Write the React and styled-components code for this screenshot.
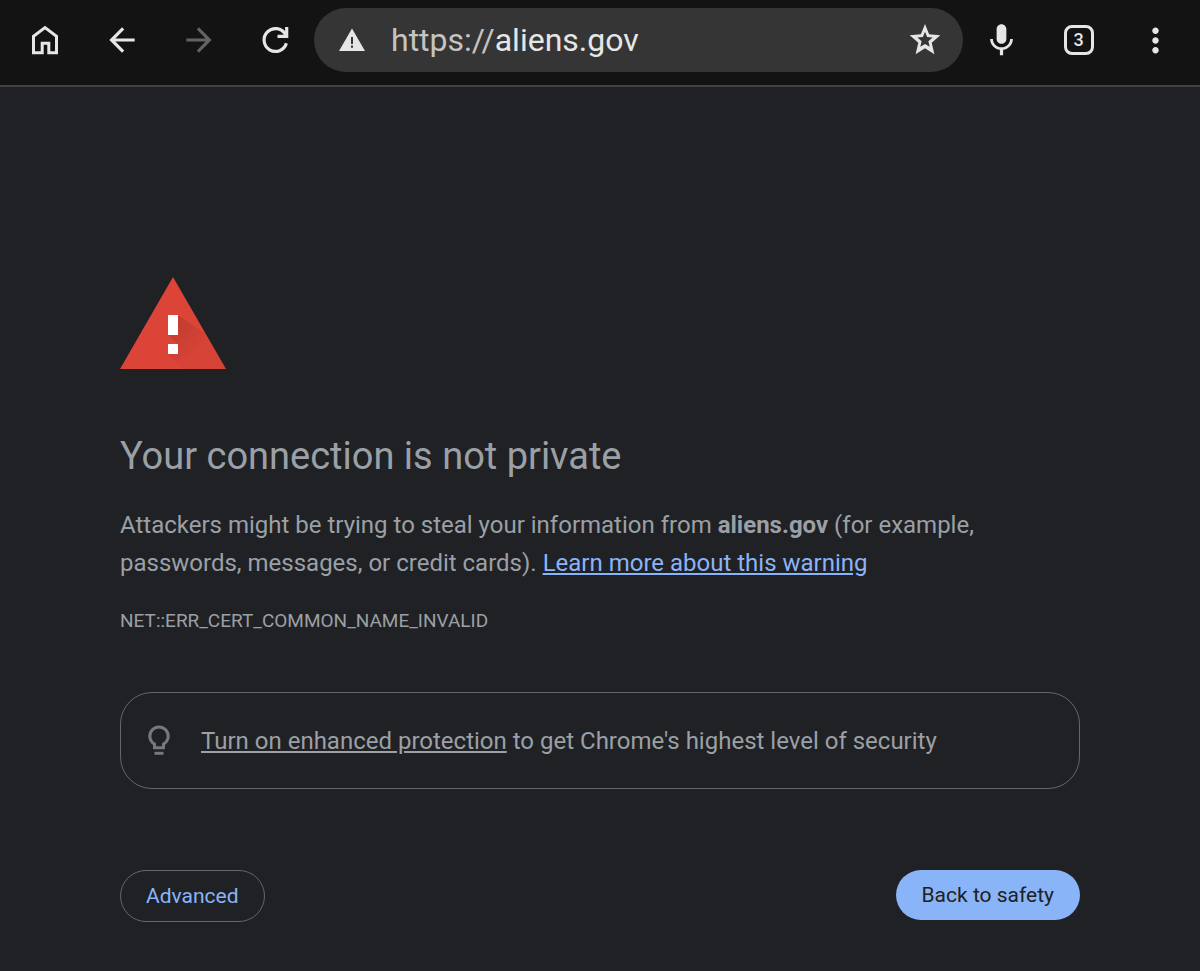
import styled, { createGlobalStyle } from 'styled-components';
import { MdArrowBack, MdArrowForward, MdMic, MdMoreVert } from 'react-icons/md';

const GlobalStyle = createGlobalStyle`
    *, *::before, *::after {
        box-sizing: border-box;
    }

    body {
        margin: 0;
        background: #202124;
        color: #9aa0a6;
        font-family: Roboto, 'Liberation Sans', sans-serif;
    }
`

const Toolbar = styled.header`
    display: flex;
    align-items: center;
    padding: 8px 6px 13px;
    background: #131313;
    border-bottom: 2px solid #424244;
`

const IconButton = styled.button`
    display: flex;
    align-items: center;
    justify-content: center;
    flex: none;
    width: 77px;
    height: 64px;
    padding: 0;
    border: none;
    background: none;
    color: #e6e6e6;
    cursor: pointer;

    &:disabled {
        color: #636363;
        cursor: default;
    }
`

const AddressBar = styled.form`
    display: flex;
    align-items: center;
    flex: 1;
    min-width: 0;
    height: 64px;
    border-radius: 32px;
    background: #353535;
`

const AddressLabel = styled.label`
    display: flex;
    align-items: center;
    flex: 1;
    min-width: 0;
    font-size: 32px;
    line-height: 40px;
    color: #c4c4c4;
`

const AddressInput = styled.input`
    flex: 1;
    min-width: 0;
    padding: 0;
    border: none;
    outline: none;
    background: none;
    font: inherit;
    color: #e6e6e6;
`

const TabCount = styled.span`
    display: flex;
    align-items: center;
    justify-content: center;
    width: 30px;
    height: 30px;
    border: 3px solid #e6e6e6;
    border-radius: 8px;
    font-family: Roboto, 'Liberation Sans', sans-serif;
    font-size: 18px;
    font-weight: 500;
    line-height: 24px;
`

const Warning = styled.main`
    max-width: 1200px;
    margin: 0 auto;
    padding: 190px 120px 48px;
`

const WarningIcon = styled.svg`
    display: block;
    width: 106px;
    height: 92px;
    margin-bottom: 64px;
`

const Title = styled.h1`
    margin: 0 0 27px;
    font-size: 38px;
    font-weight: 400;
    line-height: 46px;
`

const Message = styled.p`
    margin: 0 0 25px;
    font-size: 24px;
    line-height: 38px;
`

const LearnMore = styled.a`
    color: #8ab4f8;
`

const ErrorCode = styled.p`
    margin: 0 0 57px;
    font-size: 19px;
    line-height: 28px;
`

const Promo = styled.section`
    display: flex;
    align-items: center;
    gap: 22px;
    min-height: 97px;
    margin-bottom: 81px;
    padding: 24px 18px;
    border: 1px solid #64666a;
    border-radius: 32px;
`

const PromoText = styled.p`
    margin: 0;
    font-size: 24px;
    line-height: 38px;

    a {
        color: inherit;
    }
`

const Actions = styled.div`
    display: flex;
    align-items: flex-start;
    justify-content: space-between;
`

const ActionButton = styled.button`
    padding: ${({ $primary }) => ($primary ? '12px 26px' : '12px 25px')};
    border: ${({ $primary }) => ($primary ? 'none' : '1px solid #64666a')};
    border-radius: 26px;
    background: ${({ $primary }) => ($primary ? '#8ab4f8' : 'transparent')};
    color: ${({ $primary }) => ($primary ? '#202124' : '#8ab4f8')};
    font-family: inherit;
    font-size: 21px;
    line-height: 26px;
    cursor: pointer;
`

function HomeIcon() {
    return (
        <svg width="32" height="32" viewBox="0 0 32 32" fill="none" stroke="currentColor" strokeWidth="3" aria-hidden="true">
            <path d="M4.5 28.8V12.2L16 3.6l11.5 8.6v16.6h-7.7v-9.5h-6.6v9.5z" />
        </svg>
    );
}

function ReloadIcon() {
    return (
        <svg width="32" height="32" viewBox="0 0 32 32" fill="none" stroke="currentColor" strokeWidth="3.2" aria-hidden="true">
            <path d="M26.4 19.3A11.4 11.4 0 1 1 25.3 10.2l1.4 2" />
            <path d="M26.7 3v9.4h-9.2" />
        </svg>
    );
}

function NotSecureIcon() {
    return (
        <svg width="27" height="24" viewBox="0 0 27 24" aria-hidden="true">
            <path d="M13 0.5l13 22.5H0z" fill="#e6e6e6" />
            <path d="M12 9h2v7h-2zM12 17.6h2v2.2h-2z" fill="#353535" />
        </svg>
    );
}

function StarIcon() {
    return (
        <svg width="40" height="40" viewBox="0 0 40 40" fill="currentColor" fillRule="evenodd" aria-hidden="true">
            <path d="M20 4l4.1 10.3 11.2 1-8.6 7.5 2.7 11.5L20 28.3l-9.4 6 2.7-11.5-8.6-7.5 11.2-1zM20 11.8l-2.1 5.2-5.5.5 4.2 3.7-1.3 5.6 4.7-2.9 4.7 2.9-1.3-5.6 4.2-3.7-5.5-.5z" />
        </svg>
    );
}

function BulbIcon() {
    return (
        <svg width="40" height="40" viewBox="0 0 40 40" fill="none" stroke="#75787c" strokeWidth="3" aria-hidden="true">
            <path d="M15.5 26.7v-3.6a9.2 9.2 0 1 1 9 0v3.6z" />
            <path d="M15.5 32.3h9" />
        </svg>
    );
}

function App() {
    return (
        <>
            <GlobalStyle />
            <Toolbar>
                <IconButton type="button" aria-label="Home"><HomeIcon /></IconButton>
                <IconButton type="button" aria-label="Back"><MdArrowBack size={38} /></IconButton>
                <IconButton type="button" aria-label="Forward" disabled><MdArrowForward size={38} /></IconButton>
                <IconButton type="button" aria-label="Reload"><ReloadIcon /></IconButton>
                <AddressBar onSubmit={(e) => e.preventDefault()}>
                    <IconButton type="button" aria-label="Site information"><NotSecureIcon /></IconButton>
                    <AddressLabel>
                        <span>https://</span>
                        <AddressInput type="text" defaultValue="aliens.gov" aria-label="Address" spellCheck={false} />
                    </AddressLabel>
                    <IconButton type="button" aria-label="Bookmark"><StarIcon /></IconButton>
                </AddressBar>
                <IconButton type="button" aria-label="Voice search"><MdMic size={39} /></IconButton>
                <IconButton type="button" aria-label="Open tabs"><TabCount>3</TabCount></IconButton>
                <IconButton type="button" aria-label="More"><MdMoreVert size={39} /></IconButton>
            </Toolbar>
            <Warning>
                <WarningIcon viewBox="0 0 106 92" aria-hidden="true">
                    <defs>
                        <linearGradient id="shadow" gradientUnits="userSpaceOnUse" x1="52" y1="52" x2="76" y2="76">
                            <stop offset="0" stopColor="#b5382d" stopOpacity="0.6" />
                            <stop offset="1" stopColor="#b5382d" stopOpacity="0.1" />
                        </linearGradient>
                    </defs>
                    <path d="M53 0l53 92H0z" fill="#db4437" />
                    <path d="M58 38l28 19.5L106 92H63L48 77h10V67L48 58h10z" fill="url(#shadow)" />
                    <path d="M48 38h10v20H48zM48 67h10v10H48z" fill="#fff" />
                </WarningIcon>
                <Title>Your connection is not private</Title>
                <Message>
                    Attackers might be trying to steal your information from <strong>aliens.gov</strong> (for
                    example, passwords, messages, or credit cards). <LearnMore href="#learn-more">Learn more about this warning</LearnMore>
                </Message>
                <ErrorCode>NET::ERR_CERT_COMMON_NAME_INVALID</ErrorCode>
                <Promo>
                    <BulbIcon />
                    <PromoText>
                        <a href="#enhanced-protection">Turn on enhanced protection</a> to get Chrome's highest level of security
                    </PromoText>
                </Promo>
                <Actions>
                    <ActionButton type="button">Advanced</ActionButton>
                    <ActionButton type="button" $primary>Back to safety</ActionButton>
                </Actions>
            </Warning>
        </>
    );
}

export default App;
